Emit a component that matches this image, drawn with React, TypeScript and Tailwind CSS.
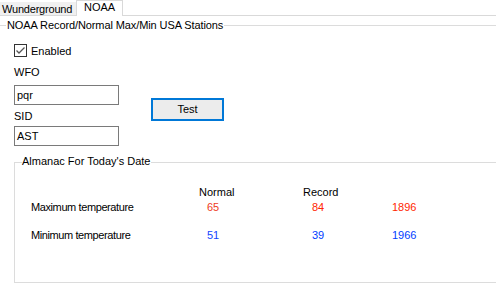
const rows = [
  { label: 'Maximum temperature', normal: '65', record: '84', year: '1896', normalColor: 'text-[#ee3b1d]', color: 'text-[#ff2600]' },
  { label: 'Minimum temperature', normal: '51', record: '39', year: '1966', normalColor: 'text-[#1245ff]', color: 'text-[#003cff]' },
]

function Checkbox() {
  return (
    <div className="w-[13px] h-[13px] border border-[#333333] bg-white flex items-center justify-center">
      <svg width="11" height="11" viewBox="0 0 11 11">
        <polyline points="1.5,5.5 4,8 9.5,2.5" fill="none" stroke="#555555" strokeWidth="1.3" />
      </svg>
    </div>
  )
}

function TextBox({ value }: { value: string }) {
  return (
    <div className="w-[105px] h-[20px] border border-[#7a7a7a] bg-white pl-[2px] flex items-center">
      {value}
    </div>
  )
}

export default function App() {
  return (
    <div className="w-[496px] h-[291px] bg-white overflow-hidden text-black text-[11px] leading-[13px] font-['Liberation_Sans',Arial,sans-serif]">
      {/* tab strip */}
      <div className="flex h-[16px] items-end">
        <div className="w-[76px] h-[14px] bg-[#f0f0f0] border-b border-[#d9d9d9] pl-[2px] leading-[12px] pt-[1px] tracking-[-0.2px]">
          Wunderground
        </div>
        <div className="w-[47px] h-[16px] bg-white border-x border-t border-[#d9d9d9] pl-[7px] leading-[13px]">
          NOAA
        </div>
        <div className="flex-1 h-[16px] border-b border-[#d9d9d9]" />
      </div>

      {/* outer group */}
      <div className="mt-[3px] h-[13px] flex items-center">
        <div className="w-[6px] h-px bg-[#dcdcdc]" />
        <span className="px-[1px] tracking-[-0.1px]">NOAA Record/Normal Max/Min USA Stations</span>
        <div className="flex-1 h-px bg-[#dcdcdc]" />
      </div>

      <div className="pl-[14px]">
        <div className="mt-[12px] h-[13px] flex items-center gap-[4px]">
          <Checkbox />
          <span className="pt-[1px]">Enabled</span>
        </div>

        <div className="flex mt-[9px]">
          <div className="flex flex-col">
            <span>WFO</span>
            <div className="mt-[6px]">
              <TextBox value="pqr" />
            </div>
            <span className="mt-[5px]">SID</span>
            <div className="mt-[3px]">
              <TextBox value="AST" />
            </div>
          </div>
          <button className="ml-[32px] mt-[32px] w-[73px] h-[23px] border-2 border-[#0078d7] bg-[#ececec] flex items-center justify-center">
            Test
          </button>
        </div>

        {/* almanac group */}
        <div className="mt-[9px]">
          <div className="flex h-[13px]">
            <div className="w-[8px] mt-[7px] border-t border-l border-[#dcdcdc]" />
            <span>Almanac For Today's Date</span>
            <div className="flex-1 mt-[7px] h-px bg-[#dcdcdc] ml-[1px]" />
          </div>
          <div className="h-[115px] border-l border-b border-[#dcdcdc] pl-[16px] pt-[18px]">
            <div className="flex">
              <span className="w-[168px]" />
              <span className="w-[104px]">Normal</span>
              <span>Record</span>
            </div>
            {rows.map((r, i) => (
              <div key={r.label} className={`flex ${i === 0 ? 'mt-[2px]' : 'mt-[15px]'}`}>
                <span className="w-[176px] tracking-[-0.4px]">{r.label}</span>
                <span className={`w-[105px] ${r.normalColor}`}>{r.normal}</span>
                <span className={`w-[80px] ${r.color}`}>{r.record}</span>
                <span className={r.color}>{r.year}</span>
              </div>
            ))}
          </div>
        </div>
      </div>
    </div>
  )
}
